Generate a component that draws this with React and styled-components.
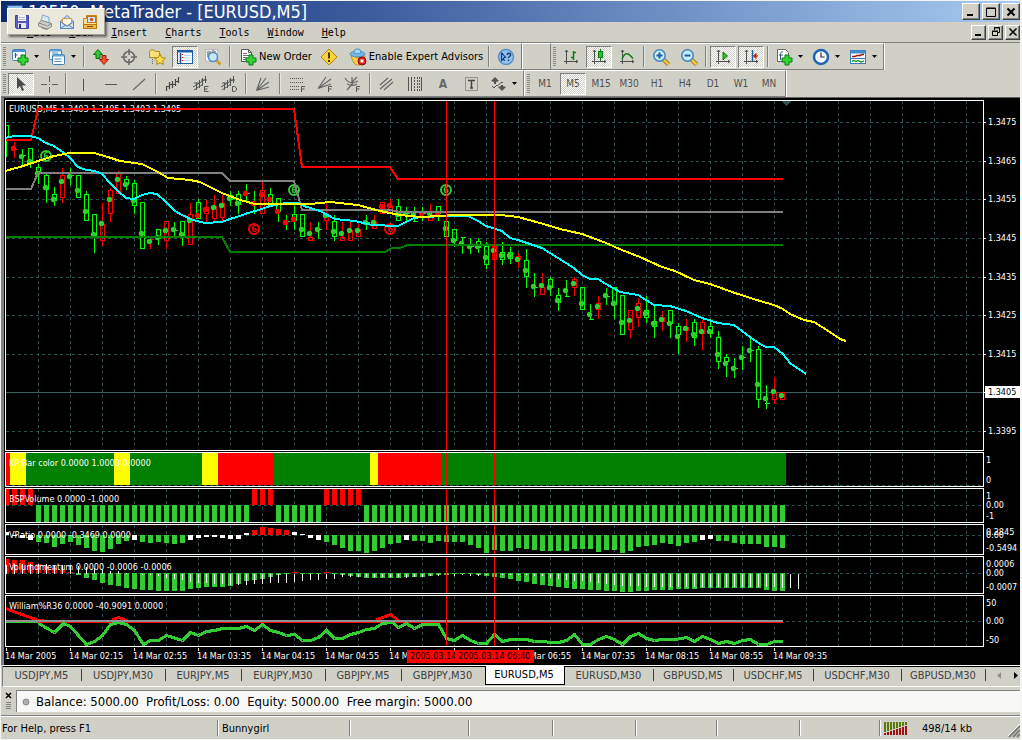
import React from 'react';
import styled, { createGlobalStyle } from 'styled-components';

const UI_FONT = '"DejaVu Sans Condensed", "Noto Sans", sans-serif';
const FACE = '#d1d0c7';
const GRID = '#2f4f4f';
const UP = '#ff0000';
const DOWN = '#00ff00';
const LIME = '#32cd32';

const GlobalStyle = createGlobalStyle`
  * {
    box-sizing: border-box;
  }

  body {
    margin: 0;
    background: ${FACE};
    font-family: ${UI_FONT};
    font-size: 11px;
    color: #000;
  }

  button {
    font: inherit;
    color: inherit;
    border: 0;
    padding: 0;
    background: none;
  }

  svg {
    display: block;
  }
`;

const Window = styled.div`
  position: relative;
  background: ${FACE};
  border: 1px solid #f4f4f0;
  border-right-width: 2px;
`;

const TitleBar = styled.header`
  display: flex;
  align-items: center;
  height: 21px;
  padding: 0 0 0 6px;
  gap: 4px;
  background: linear-gradient(90deg, #0c2a70 0%, #3c5c9e 36%, #7394c8 68%, #a6caf0 100%);
`;

const Title = styled.h1`
  flex: 1;
  margin: 0;
  font-size: 18px;
  line-height: 21px;
  font-weight: 400;
  color: #fff;
  white-space: pre;
`;

const WindowButtons = styled.div`
  display: flex;
  gap: 2px;
`;

const WindowButton = styled.button`
  display: flex;
  align-items: center;
  justify-content: center;
  width: ${props => (props.$small ? 15 : 18)}px;
  height: ${props => (props.$small ? 15 : 17)}px;
  background: ${FACE};
  border: 1px solid;
  border-color: #fff #404040 #404040 #fff;
  box-shadow: inset -1px -1px 0 #808080;
`;

const MenuBar = styled.nav`
  display: flex;
  align-items: center;
  height: 21px;
  padding-left: 26px;
  border-bottom: 1px solid #808080;
  font-family: "DejaVu Sans Mono", "Liberation Mono", monospace;
  font-size: 10px;
`;

const MenuItem = styled.button`
  margin-right: 18px;
  padding-top: 2px;
  line-height: 18px;

  &::first-letter {
    text-decoration: underline;
  }
`;

const Spacer = styled.div`
  flex: 1;
`;

// hovers over the title and the first menu entries
const FloatingBar = styled.div`
  position: absolute;
  left: 6px;
  top: 7px;
  display: flex;
  align-items: center;
  justify-content: space-between;
  width: 98px;
  height: 27px;
  padding: 0 6px;
  background: #ebe9dc;
  border: 1px solid;
  border-color: #fff #a5a294 #a5a294 #fff;
  box-shadow: 2px 2px 2px rgba(0, 0, 0, 0.5);
`;

const ToolRow = styled.div`
  display: flex;
  height: 27px;
`;

const Bar = styled.div`
  display: flex;
  align-items: center;
  gap: 2px;
  padding: 0 2px;
  border-top: 1px solid #fff;
  border-bottom: 1px solid #808080;
  border-right: 1px solid #808080;
  box-shadow: 1px 0 0 #fff;

  & + & {
    padding: 0 3px;
  }
`;

const BarGap = styled.div`
  width: 29px;
  border-top: 1px solid #fff;
  border-bottom: 1px solid #808080;
  border-right: 1px solid #808080;
`;

const Grip = styled.span`
  width: 3px;
  height: 20px;
  background: repeating-linear-gradient(180deg, #8a8a84 0 1px, ${FACE} 1px 2px);
`;

const Separator = styled.span`
  width: 2px;
  height: 21px;
  margin: 0 1px;
  border-left: 1px solid #808080;
  border-right: 1px solid #e6e6e0;
`;

const ToolButton = styled.button`
  display: flex;
  align-items: center;
  justify-content: center;
  width: 26px;
  height: 22px;
  border: 1px solid transparent;
  border-color: ${props => (props.$pressed ? '#808080 #fff #fff #808080' : 'transparent')};
  background: ${props =>
    props.$pressed ? `repeating-conic-gradient(#fff 0 25%, ${FACE} 0 50%) 0 0 / 2px 2px` : 'none'};
`;

const DropButton = styled(ToolButton)`
  width: 35px;
  justify-content: flex-start;
  gap: 4px;
  padding-left: 2px;
`;

const TextButton = styled(ToolButton)`
  width: auto;
  justify-content: flex-start;
  gap: 2px;
  padding: 0 1px 0 4px;
  white-space: nowrap;
`;

const PeriodButton = styled(ToolButton)`
  font-size: 10px;
  color: #505050;
`;

const LetterButton = styled(ToolButton)`
  font-size: 12px;
  font-weight: 700;
  color: #666;
`;

const ChartWindow = styled.main`
  display: flex;
  flex-direction: column;
  gap: 1px;
  padding: 2px 0 0 1px;
  background: #000;
  border-top: 1px solid #606060;
  border-left: 3px solid #808080;
`;

const Pane = styled.section`
  display: grid;
  grid-template-columns: minmax(0, 1fr) 36px;
  height: ${props => props.$height}px;
`;

const Plot = styled.div`
  border: 1px solid #fff;
  overflow: hidden;
`;

const Canvas = styled.svg`
  width: 100%;
  height: 100%;
`;

const ChartText = styled.text`
  font-family: ${UI_FONT};
  font-size: 9px;
  fill: ${props => props.$color || '#fff'};
`;

const SignalText = styled(ChartText)`
  font-weight: 700;
  text-anchor: middle;
`;

const TimeAxis = styled.div`
  position: relative;
  display: flex;
  height: 17px;
  overflow: hidden;
`;

const TimeLabel = styled.span`
  flex: 0 0 64px;
  padding-top: 2px;
  font-size: 9px;
  line-height: 12px;
  color: #fff;
  white-space: nowrap;

  &::before {
    content: '';
    position: absolute;
    top: 0;
    width: 1px;
    height: 3px;
    margin-left: 1px;
    background: #fff;
  }
`;

const TimeMark = styled.span`
  position: absolute;
  top: 2px;
  left: ${props => props.$x}px;
  width: ${props => props.$width}px;
  height: 13px;
  padding-left: 3px;
  overflow: hidden;
  font-size: 9px;
  line-height: 13px;
  white-space: nowrap;
  color: #000;
  background: #f00;
`;

const TabBar = styled.div`
  display: flex;
  height: 22px;
  margin-left: 1px;
  border-top: 1px solid #fff;
  border-bottom: 1px solid #fff;
  border-left: 1px solid #808080;
`;

const Tab = styled.button`
  flex: 0 0 ${props => props.$width}px;
  position: relative;
  height: 19px;
  padding: 0 2px 2px 0;
  border-top: 1px solid #000;
  color: #404040;

  &::after {
    content: '';
    position: absolute;
    right: 0;
    top: 2px;
    width: 1px;
    height: 12px;
    background: #404040;
  }

  &[aria-selected='true'] {
    color: #000;
    background: #fff;
    border: 1px solid #000;
    border-top: 0;
  }

  &[aria-selected='true']::after,
  &:has(+ [aria-selected='true'])::after {
    display: none;
  }
`;

const TabScroll = styled.div`
  flex: 1;
  display: flex;
  justify-content: flex-end;
  gap: 8px;
  padding-right: 1px;
  height: 19px;
  border-top: 1px solid #000;
`;

const Terminal = styled.div`
  display: flex;
  height: 29px;
  padding-top: 3px;
  border-bottom: 1px solid #808080;
`;

const TerminalSide = styled.div`
  display: flex;
  flex-direction: column;
  align-items: center;
  gap: 3px;
  width: 15px;
  padding-top: 2px;
`;

const TerminalGrip = styled.span`
  width: 5px;
  height: 8px;
  background: repeating-linear-gradient(180deg, #808080 0 1px, ${FACE} 1px 2px);
`;

const AccountLine = styled.div`
  flex: 1;
  display: flex;
  align-items: center;
  gap: 6px;
  height: 22px;
  padding-left: 5px;
  background: #f8f8f6;
  border-top: 1px solid #808080;
  border-left: 1px solid #808080;
  font-size: 13px;
  white-space: pre;
`;

const StatusBar = styled.footer`
  display: flex;
  align-items: center;
  height: 23px;
  border-top: 1px solid #fff;
`;

const StatusCell = styled.div`
  flex: ${props => props.$grow || 0} 0 ${props => props.$width}px;
  display: flex;
  align-items: center;
  gap: 14px;
  height: 16px;
  padding-left: ${props => (props.$first ? 1 : 4)}px;
  border-left: ${props => (props.$first ? '0' : '1px solid #808080')};
  box-shadow: ${props => (props.$first ? 'none' : 'inset 1px 0 0 #fff')};
  white-space: nowrap;
`;

/* ---------- icons ---------- */

const Icon = ({ children, size = 18 }) => (
  <svg width={size} height={size} viewBox={`0 0 ${size} ${size}`} fill="none" aria-hidden="true">
    {children}
  </svg>
);

const DropArrow = () => (
  <svg width="7" height="4" viewBox="0 0 7 4" aria-hidden="true">
    <path d="M1 0h5L3.500 3z" fill="#000" />
  </svg>
);

const Plus = ({ x, y }) => (
  <path
    d={`M${x + 3} ${y}h4v3h3v4h-3v3h-4v-3h-3v-4h3z`}
    fill="#33d633"
    stroke="#0a7d14"
  />
);

const Axes = ({ color = '#505050' }) => (
  <path d="M4.500 2v14M2 13.500h14M3 4l1.500-2L6 4M14 12l2 1.500-2 1.500" stroke={color} />
);

const icons = {
  newChart: (
    <>
      <rect x="1.500" y="1.500" width="13" height="11" rx="1" fill="#f4faff" stroke="#3f7fb5" />
      <path d="M2 3h12" stroke="#4d96cf" strokeWidth="2" />
      <path d="M4.500 5v5M3.500 7h3" stroke="#357" />
      <Plus x={7} y={7} />
    </>
  ),
  profiles: (
    <>
      <rect x="1.500" y="1.500" width="12" height="10" rx="1" fill="#eaf5fd" stroke="#3f7fb5" />
      <rect x="4.500" y="6.500" width="12" height="10" rx="1" fill="#f7fbff" stroke="#3f7fb5" />
      <path d="M2 2.500h11M5 7.500h11" stroke="#5fa3d8" strokeWidth="2" />
      <path d="M4 5h6M6.500 11h7M6.500 13.500h7" stroke="#5a93c0" />
    </>
  ),
  quotes: (
    <>
      <path d="M6 1.500l4.500 5H8v4H4v-4H1.500z" fill="#35c435" stroke="#0b6b12" />
      <path d="M12 16.500l-4.500-5H10v-4h4v4h2.500z" fill="#f2502a" stroke="#a01b08" />
    </>
  ),
  crosshair: (
    <>
      <circle cx="9" cy="9" r="5.500" stroke="#666" strokeWidth="1.500" />
      <path d="M9 1v6M9 11v6M1 9h6M11 9h6" stroke="#666" strokeWidth="1.500" />
    </>
  ),
  navigator: (
    <>
      <path d="M1.500 3.500l1-1.500h4l1 1.500h4v6h-10z" fill="#f8e07a" stroke="#b08e1c" />
      <path d="M4.500 11v5" stroke="#666" strokeDasharray="1 1" />
      <path d="M12 6l1.700 3.600 3.800.5-2.800 2.600.7 3.800L12 14.600l-3.400 1.900.7-3.800-2.800-2.600 3.800-.5z" fill="#ffe14d" stroke="#b8860b" />
    </>
  ),
  marketWatch: (
    <>
      <rect x="1.500" y="2.500" width="15" height="13" fill="#fff" stroke="#1b5ca8" />
      <path d="M2 3.500h14" stroke="#1b5ca8" strokeWidth="2" />
      <path d="M4.500 5v10" stroke="#174a8a" strokeWidth="1.500" />
      <path d="M8 7.500h7M8 10h7M8 12.500h7" stroke="#b9d4ef" />
      <path d="M6.500 6v1M6.500 9v1M6.500 12v1" stroke="#e00" strokeWidth="1.500" />
    </>
  ),
  dataWindow: (
    <>
      <path d="M1.500 1.500h12v12h-12z" fill="#eee" stroke="#999" strokeDasharray="1 1" />
      <path d="M4 9V3M6 7V3M9 7V2M11 6V3" stroke="#555" />
      <path d="M12.500 12.500l4 4" stroke="#d59a28" strokeWidth="2.500" />
      <circle cx="9" cy="9" r="4.500" fill="#c8e8fa" stroke="#4f8fbf" strokeWidth="1.500" />
    </>
  ),
  newOrder: (
    <>
      <path d="M2.500 1.500h7l3 3v9h-10z" fill="#fff" stroke="#555" />
      <path d="M9.500 1.500v3h3" stroke="#555" />
      <path d="M4 5.500h4M4 7.500h6M4 9.500h4M4 11.500h3" stroke="#777" />
      <Plus x={7} y={7} />
    </>
  ),
  warning: (
    <>
      <path d="M9 1l8 8-8 8-8-8z" fill="#fbd23a" stroke="#b8860b" strokeLinejoin="round" />
      <path d="M9 4.500v6M9 12v2" stroke="#4c3a00" strokeWidth="2" />
    </>
  ),
  expert: (
    <>
      <path d="M2 7l7 3 7-2-2 5c-1 3-3 4-5 4-4 0-6-5-7-10z" fill="#f7d046" stroke="#b98b16" />
      <ellipse cx="8.500" cy="6" rx="7.500" ry="2.800" fill="#79b9e8" stroke="#4a90c4" />
      <path d="M5 5c0-3 1-4 3.500-4S12 2 12 5c-2 1-5 1-7 0z" fill="#a4d4f4" stroke="#4a90c4" />
      <circle cx="13" cy="13" r="4" fill="#e01b1b" stroke="#8d0b0b" />
      <rect x="11.500" y="11.500" width="3" height="3" fill="#fff" />
    </>
  ),
  help: (
    <>
      <circle cx="9" cy="9" r="7.500" fill="#8fc3ee" stroke="#5a8fc6" strokeWidth="1.500" />
      <path d="M4.500 4.500v8l2-2 1 2.500M4.500 4.500l4 5H6.500" stroke="#123f7a" strokeWidth="1.200" />
      <path d="M10 7c.5-2.500 4-2 3.500 0 0 1.500-2 1.500-2 3M11.500 11.500v1.500" stroke="#123f7a" strokeWidth="1.500" />
    </>
  ),
  barChart: (
    <>
      <Axes />
      <path d="M11.500 3v9M9 9.500h2.500M11.500 4.500H14" stroke="#0a7d14" strokeWidth="1.500" />
    </>
  ),
  candles: (
    <>
      <Axes />
      <path d="M10.500 1v12" stroke="#0a7d14" />
      <rect x="8.500" y="3.500" width="4" height="6" fill="#27c527" stroke="#0a7d14" />
    </>
  ),
  lineChart: (
    <>
      <Axes />
      <path d="M4 11c2-5 4-6 6-5 2 .5 3 2.500 5 4.500" stroke="#0a7d14" strokeWidth="1.500" />
    </>
  ),
  zoomIn: (
    <>
      <path d="M11.500 11.500l5 5" stroke="#8a6410" strokeWidth="4" />
      <path d="M11.500 11.500l5 5" stroke="#f2c83c" strokeWidth="2.500" />
      <circle cx="7.500" cy="7.500" r="5.700" fill="#c9ecfc" stroke="#3a86bd" strokeWidth="1.500" />
      <path d="M7.500 4.500v6M4.500 7.500h6" stroke="#1c5f9a" strokeWidth="2" />
    </>
  ),
  zoomOut: (
    <>
      <path d="M11.500 11.500l5 5" stroke="#8a6410" strokeWidth="4" />
      <path d="M11.500 11.500l5 5" stroke="#f2c83c" strokeWidth="2.500" />
      <circle cx="7.500" cy="7.500" r="5.700" fill="#c9ecfc" stroke="#3a86bd" strokeWidth="1.500" />
      <path d="M4.500 7.500h6" stroke="#1c5f9a" strokeWidth="2" />
    </>
  ),
  autoScroll: (
    <>
      <Axes />
      <path d="M9 4v8l4.500-4z" fill="#27c527" stroke="#0a7d14" />
    </>
  ),
  chartShift: (
    <>
      <Axes />
      <path d="M10.500 2v11" stroke="#1c5f9a" strokeWidth="1.500" />
      <path d="M16 8h-4M14 5.500L11.500 8l2.500 2.500z" stroke="#c01c0c" fill="#c01c0c" />
    </>
  ),
  indicators: (
    <>
      <path d="M2.500 1.500h8l3 3v9h-11z" fill="#fff" stroke="#666" />
      <path d="M8 4c-2-1-2.500 1-2.500 3v5M4 7h4" stroke="#357" />
      <Plus x={7} y={7} />
    </>
  ),
  clock: (
    <>
      <circle cx="9" cy="9" r="7" fill="#f2f8fd" stroke="#1f63b5" strokeWidth="2.500" />
      <path d="M9 4.500V9h3.500" stroke="#333" strokeWidth="1.200" />
    </>
  ),
  templates: (
    <>
      <rect x="1.500" y="2.500" width="15" height="13" fill="#fff" stroke="#3a7bb8" />
      <path d="M2 4h14" stroke="#3f8ed0" strokeWidth="3" />
      <path d="M3 8.500h3l2-1h3l2-1h2" stroke="#a3180c" strokeWidth="1.500" />
      <path d="M2 10.500h14" stroke="#3a7bb8" />
      <path d="M3 13.500l2-1 2 1 2-1 3 1.500 3-1" stroke="#0a8a1c" strokeWidth="1.200" />
    </>
  ),
  cursor: <path d="M5 2v12l3-3 2 5 2-1-2-4.500h4z" fill="#4a4a4a" />,
  cross: <path d="M9.500 1v6M9.500 12v6M1 9.500h6M12 9.500h6M9 9.500h1" stroke="#606060" />,
  vline: <path d="M9.500 4v12" stroke="#555" />,
  hline: <path d="M3 9.500h12" stroke="#555" />,
  trend: <path d="M3 15L15 4" stroke="#666" strokeWidth="1.200" />,
  wave: (
    <path d="M2.500 16v-5M2.500 11.500h3M5.500 14V7M5.500 9.500h3M8.500 13V6M8.500 9.500h3M11.500 11V4M11.500 6.500h3M14.500 8V2" stroke="#444" strokeWidth="1.200" />
  ),
  waveE: (
    <>
      <path d="M1 12L14 4M2 15L11 9M4.500 15V8M7.500 13V5M10.500 11V3M13.500 8V1M2 8h6M9 5h6" stroke="#555" />
      <path d="M16.500 11.500h-4v5h4M12.500 14h3" stroke="#555" />
    </>
  ),
  waveD: (
    <>
      <path d="M1 12L14 4M2 15L11 9M4.500 15V8M7.500 13V5M10.500 11V3M13.500 8V1M2 8h6M9 5h6" stroke="#555" />
      <path d="M12.500 11.500h2l2 1.500v2l-2 1.500h-2z" stroke="#555" />
    </>
  ),
  fan: <path d="M2.500 15.500L15 12M2.500 15.500L15 7M2.500 15.500L12 3M2.500 15.500L7 3" stroke="#666" strokeWidth="1.200" />,
  fibo: (
    <>
      <path d="M2 3.500h14M2 7.500h14M2 11.500h9M2 14.500h9" stroke="#555" strokeDasharray="1 1" />
      <path d="M13.500 17v-5.500h3.500M13.500 14h3" stroke="#555" />
    </>
  ),
  fiboFan: (
    <>
      <path d="M2 13.500L15 9M2 13.500L15 4M2 13.500L10 2" stroke="#666" strokeWidth="1.200" />
      <path d="M12.500 17v-5.500h3.500M12.500 14h3" stroke="#555" />
    </>
  ),
  fiboArc: (
    <>
      <path d="M1 3c3 5 8 6 13 3M3 9c4 2 7 2 10 0M9 8L3 15M7 8l6-6M8 2v8" stroke="#666" strokeWidth="1.200" />
      <path d="M12.500 17v-5.500h3.500M12.500 14h3" stroke="#555" />
    </>
  ),
  channel: <path d="M2 10l8-7M2 14L14 4M6 15l9-8" stroke="#666" strokeWidth="1.200" />,
  cycles: (
    <>
      <path d="M2.500 2v14M5.500 2v14M15.500 2v14" stroke="#555" />
      <path d="M8.500 2v14M11.500 2v14M13.500 2v14" stroke="#555" strokeDasharray="2 1" />
    </>
  ),
  label: (
    <>
      <rect x="3.500" y="2.500" width="12" height="13" stroke="#555" strokeDasharray="1 1" />
      <path d="M6 5.500h7M9.500 5v8M8 13h3" stroke="#444" strokeWidth="1.500" />
    </>
  ),
  shapes: (
    <>
      <path d="M6 2l4 4-3 1v2H5V7L2 6z" fill="#555" />
      <path d="M8 11l5-4 1 1" stroke="#555" />
      <path d="M13 16l4-4-3-1v-1h-2v1l-3 1z" fill="#555" />
      <path d="M3 11l2 2 3-3" stroke="#555" />
    </>
  ),
  save: (
    <>
      <path d="M1.500 1.500h13v13h-12l-1-1z" fill="#5b5bc0" stroke="#44449c" />
      <rect x="4" y="1" width="8" height="6" fill="#f4f4fb" />
      <path d="M5 3.500h6M5 5.500h6" stroke="#b8b8d8" />
      <rect x="4" y="9" width="8" height="5" fill="#e4e4f4" />
      <rect x="5" y="10" width="2" height="4" fill="#2b2b86" />
    </>
  ),
  print: (
    <>
      <path d="M4 7l1.500-6 6 2 1 6z" fill="#d6e9fb" stroke="#8ea6c4" />
      <path d="M1.500 9l3-2.500 10 3v3l-4 2.500-9-3z" fill="#d0d0cc" stroke="#8a8a84" />
      <path d="M2 9l8.500 3 4-2.500M4 13.500l5 2 2-1" stroke="#8a8a84" />
    </>
  ),
  mail: (
    <>
      <path d="M1.500 7L8 1.500 14.500 7v7.500h-13z" fill="#cfe3fa" stroke="#5a86c9" />
      <path d="M3.500 4.500h9v5l-4.500 3-4.500-3z" fill="#fff6dd" stroke="#d39a4c" />
      <path d="M1.500 7.500L8 12l6.500-4.500M1.500 14.500L6.500 11M14.500 14.500l-5-3.500" stroke="#5a86c9" />
    </>
  ),
  pictures: (
    <>
      <path d="M1.500 4.500h3v-3h10v13h-13z" fill="#ffe39b" stroke="#c8851a" />
      <rect x="5.500" y="2.500" width="8" height="6" fill="#cfe9fb" stroke="#b9770e" />
      <circle cx="9.500" cy="5.500" r="1.700" fill="#d24b33" />
      <path d="M1.500 10.500h13v4h-13z" fill="#f8b94a" stroke="#b9770e" />
      <path d="M5 12.500h6" stroke="#7b4a00" />
    </>
  ),
};

/* ---------- chart data ---------- */

const barX = i => 6 + i * 8;

// rising, high, body top, body bottom, low, marker, rising marker
const candles = [
  [0, 125, 125, 137, 156], [1, 141, 149, 149, 157, 148, 1], [0, 148, 155, 155, 165, 156], [0, 148, 148, 162, 167, 161],
  [0, 163, 167, 171, 183, 173], [0, 171, 175, 189, 202, 187], [0, 186, 194, 200, 205, 199], [1, 167, 175, 197, 202, 181],
  [0, 167, 175, 175, 184, 176], [0, 175, 175, 197, 197, 190], [0, 190, 194, 220, 220, 211], [0, 214, 214, 235, 252, 234],
  [1, 202, 224, 240, 245, 223], [1, 187, 190, 213, 221, 199], [1, 170, 172, 193, 193, 179], [0, 175, 179, 184, 189, 184],
  [0, 179, 183, 205, 213, 200], [0, 202, 202, 248, 248, 233], [1, 238, 239, 239, 248, 241], [0, 229, 229, 238, 244, 237],
  [1, 221, 221, 240, 248, 230], [0, 221, 230, 230, 236, 229], [0, 221, 221, 235, 245, 234], [1, 202, 214, 244, 244, 220],
  [0, 198, 202, 218, 218, 215, 1], [1, 199, 207, 213, 221, 209, 1], [1, 194, 206, 218, 221, 207], [1, 194, 203, 217, 221, 205],
  [0, 190, 195, 199, 205, 198], [0, 190, 194, 204, 213, 203], [0, 183, 193, 193, 202, 193, 1], [0, 190, 203, 203, 213, 203, 1],
  [1, 179, 190, 213, 213, 194, 1], [0, 187, 194, 203, 203, 199, 1], [0, 198, 198, 211, 221, 211, 1], [0, 214, 221, 221, 229, 222, 1],
  [0, 203, 214, 220, 229, 219, 1], [0, 214, 214, 236, 236, 229], [1, 221, 237, 240, 240, 233], [0, 221, 229, 229, 238, 229],
  [1, 203, 214, 220, 229, 215], [0, 214, 221, 236, 240, 231], [1, 221, 237, 240, 240, 233], [1, 221, 230, 240, 240, 230],
  [1, 223, 229, 236, 236, 230], [0, 214, 222, 222, 229, 222], [1, 214, 221, 228, 228, 222], [1, 202, 202, 213, 213, 206, 1],
  [1, 198, 206, 213, 213, 205, 1], [0, 198, 206, 220, 220, 214], [0, 206, 213, 213, 220, 213], [0, 206, 221, 221, 221, 214],
  [0, 206, 213, 213, 220, 213, 1], [1, 203, 214, 220, 220, 213], [0, 206, 206, 213, 220, 213, 1], [0, 221, 221, 236, 236, 228],
  [0, 229, 229, 240, 246, 240], [0, 237, 237, 237, 253, 243], [0, 237, 246, 246, 253, 246], [0, 237, 241, 247, 252, 246],
  [0, 241, 246, 264, 268, 257], [1, 246, 246, 259, 259, 250], [0, 241, 252, 259, 264, 255], [0, 246, 252, 258, 263, 255],
  [1, 252, 256, 259, 267, 259], [0, 248, 260, 276, 287, 270], [0, 272, 287, 287, 296, 286], [1, 272, 287, 294, 294, 285],
  [0, 276, 279, 287, 295, 287], [0, 287, 295, 302, 310, 300], [0, 279, 296, 296, 296, 290], [1, 276, 279, 287, 295, 283],
  [0, 287, 287, 309, 309, 303], [0, 303, 319, 319, 319, 314], [1, 295, 303, 309, 318, 306], [0, 287, 296, 296, 304, 295],
  [0, 287, 287, 304, 318, 303], [0, 295, 295, 334, 334, 322], [1, 310, 310, 329, 337, 320], [1, 297, 303, 317, 326, 308],
  [0, 295, 310, 317, 322, 313], [0, 305, 321, 326, 337, 323], [1, 310, 317, 321, 330, 319], [0, 310, 310, 323, 337, 323],
  [0, 322, 326, 334, 353, 336], [1, 318, 327, 330, 341, 328], [0, 318, 322, 337, 345, 334], [1, 319, 322, 333, 349, 331],
  [0, 318, 326, 333, 337, 331], [0, 330, 337, 361, 368, 354], [0, 353, 357, 361, 376, 363], [0, 357, 368, 368, 377, 368],
  [0, 345, 357, 357, 369, 357], [0, 338, 350, 350, 361, 350], [0, 345, 349, 399, 407, 384], [0, 384, 403, 403, 408, 398],
  [1, 376, 392, 399, 403, 391], [1, 392, 392, 399, 399, 395],
];

const overlays = [
  { color: '#f00', points: '5,140 31,140 38,109 294,109 302,167 390,167 398,179 783,179' },
  { color: '#808080', points: '5,189 31,189 38,173 222,173 230,181 294,181 302,210 390,210 400,212 783,212' },
  { color: '#008000', points: '5,237 222,237 230,252 385,252 392,248 400,248 408,245 783,245' },
  {
    color: '#0ff',
    points:
      '5,138 14,136 30,136 38,138 46,143 54,146 64,153 70,158 78,167 86,170 95,171 102,174 110,183 118,191 126,198 134,199 142,195 150,193 157,194 166,202 175,211 182,215 193,220 205,223 222,222 230,219 240,216 248,213 262,209 270,206 286,203 298,203 304,206 320,211 335,219 355,221 372,225 398,226 408,221 414,218 422,217 446,216 468,216 478,221 486,226 502,231 510,238 518,240 530,244 542,248 558,258 574,268 582,275 590,279 598,279 606,284 620,292 638,295 654,305 670,306 686,311 702,318 718,323 734,325 750,337 760,344 766,347 774,347 783,354 790,363 806,374',
  },
  {
    color: '#ff0',
    points:
      '5,171 20,167 38,161 54,156 70,153 94,153 108,157 120,161 142,164 158,172 168,178 190,180 200,182 222,193 240,200 255,204 310,204 330,202 358,205 380,211 400,215 420,217 440,216 454,215 500,215 518,217 540,223 560,229 582,234 606,243 622,250 640,257 662,267 675,271 694,280 710,284 735,293 760,301 774,305 783,309 790,314 804,320 814,322 830,332 840,339 846,341',
  },
];

const signals = [
  [46, 156, LIME], [294, 190, LIME], [446, 190, LIME], [254, 229, '#f00'], [390, 229, '#f00'],
];

const prices = ['1.3475', '1.3465', '1.3455', '1.3445', '1.3435', '1.3425', '1.3415', '1.3405', '1.3395'];
const priceY = i => Math.round(122 + (i * 309) / 8);

const colorBands = [
  [6, 10, '#f00'], [10, 26, '#ff0'], [26, 114, '#008000'], [114, 130, '#ff0'], [130, 202, '#008000'],
  [202, 218, '#ff0'], [218, 274, '#f00'], [274, 370, '#008000'], [370, 378, '#ff0'], [378, 442, '#f00'],
  [442, 786, '#008000'],
];

const isBuyVolume = i => i < 4 || (i > 30 && i < 34) || (i > 39 && i < 45);

const ratio = [
  -3, 1, 3, 5, 7, 8, 12, 9, 7, 10, 13, 16, 17, 14, 9, 6, 5, 7, 8, 7, 8, 9, 8, 5, 3, 2, 2, 3, 4, 4, -2, -5, -8, -7, -6, -5,
  -3, -1, 3, 5, 7, 10, 13, 16, 16, 18, 16, 13, 9, 8, 5, 6, 6, 8, 6, 7, 7, 7, 10, 13, 18, 15, 16, 16, 13, 14, 15, 16, 16,
  16, 16, 14, 14, 14, 17, 15, 15, 18, 16, 12, 11, 10, 8, 9, 11, 8, 7, 5, 4, 6, 6, 8, 9, 9, 9, 12, 12, 13,
];

const ratioColor = v => {
  if (v <= -5) return '#f00';
  return v < 6 ? '#fff' : LIME;
};

const momentum = [
  -14, -13, -13, -11, -9, -7, -5, -3, -1, 2, 5, 7, 10, 12, 13, 15, 16, 17, 17, 18, 18, 18, 18, 16, 15, 14, 14, 14, 13, 11,
  8, 7, 6, 4, 2, 1, -1, 1, 1, 1, -1, 1, 2, 3, 4, 5, 5, 5, 5, 5, 4, 4, 4, 3, 2, 2, 1, 1, 1, 2, 3, 4, 5, 6, 8, 9, 11, 12,
  13, 14, 15, 16, 16, 17, 17, 18, 18, 19, 19, 18, 18, 17, 17, 17, 16, 16, 16, 15, 15, 15, 15, 15, 15, 15, 15, 17, 18, 18,
];

const momentumSignal = [
  -9, -10, -10, -10, -10, -10, -9, -9, -9, -8, -7, -6, -4, -3, -3, -1, 0, 1, 1, 2, 4, 5, 6, 8, 9, 9, 10, 10, 11, 11, 11,
  10, 10, 9, 9, 9, 8, 7, 6, 6, 5, 5, 3, 3, 3, 3, 3, 3, 3, 3, 4, 3, 3, 2, 2, 2, 2, 1, 2, 2, 1, 1, 1, 1, 1, 1, 2, 2, 4, 5,
  6, 7, 7, 8, 9, 10, 11, 12, 12, 12, 13, 13, 13, 13, 13, 13, 13, 13, 13, 13, 13, 13, 13, 13, 13, 13, 13, 14, 14, 15,
];

const williams =
  '38,623 54,632 63,623 70,626 86,644 94,641 102,635 110,624 118,622 126,624 134,630 143,644 150,640 158,640 166,635 182,640 190,632 198,635 206,631 214,630 222,628 238,628 246,626 254,630 262,624 270,630 278,632 286,635 294,634 302,640 310,640 318,637 326,630 334,638 342,638 350,634 358,632 366,629 374,628 382,623 392,622 398,627 406,623 414,628 422,624 438,624 446,638 454,640 462,635 470,640 478,643 486,643 494,634 502,641 510,639 526,639 534,641 558,642 566,640 574,634 582,644 590,644 598,639 606,636 614,639 622,644 630,636 638,633 646,638 654,640 662,639 675,639 686,637 694,641 702,636 710,639 718,643 726,641 734,643 742,640 750,639 758,644 766,644 774,641 782,641';

const times = [
  '14 Mar 2005', '14 Mar 02:15', '14 Mar 02:55', '14 Mar 03:35', '14 Mar 04:15', '14 Mar 04:55', '14 M', '',
  '14 Mar 06:55', '14 Mar 07:35', '14 Mar 08:15', '14 Mar 08:55', '14 Mar 09:35',
];

const tabs = [
  ['USDJPY,M5', 79], ['USDJPY,M30', 84], ['EURJPY,M5', 76], ['EURJPY,M30', 84], ['GBPJPY,M5', 76], ['GBPJPY,M30', 83],
  ['EURUSD,M5', 80], ['EURUSD,M30', 89], ['GBPUSD,M5', 80], ['USDCHF,M5', 80], ['USDCHF,M30', 88], ['GBPUSD,M30', 84],
];

/* ---------- chart parts ---------- */

// hairlines sit on pixel centres, filled shapes and even strokes on pixel edges
const Hairlines = props => <g transform="translate(0.5 0.5)" fill="none" {...props} />;

// y values are measured on one common scale, `top` is where the pane starts on it
const ChartPane = ({ top, height, label, labelBehind, levels, ticks, children }) => {
  const main = height > 100;
  const title = <ChartText x="9" y={top + (main ? 12 : 14)}>{label}</ChartText>;

  return (
    <Pane $height={height}>
      <Plot>
        <Canvas>
          <g transform={`translate(-6 ${-top - 1})`} shapeRendering="crispEdges" fill="none">
            <Hairlines stroke={GRID} strokeDasharray="3 3">
              {Array.from({ length: 62 }, (_, i) => (
                <path key={i} d={`M${38 + i * 32} ${top}v${height}`} />
              ))}
              {levels.map(y => (
                <path key={y} d={`M5 ${y}h2000`} />
              ))}
            </Hairlines>
            {labelBehind && title}
            {children}
            {!labelBehind && title}
            <Hairlines stroke="#f00">
              <path d={`M446 ${top}v${height}M494 ${top}v${height}`} />
            </Hairlines>
          </g>
        </Canvas>
      </Plot>
      <Canvas>
        <g transform={`translate(-984 ${-top})`} shapeRendering="crispEdges">
          {ticks.map(([text, y]) => {
            const current = text === '1.3405';
            return (
              <React.Fragment key={text}>
                {main && <rect x="984" y={y} width="2" height="1" fill="#fff" />}
                {current && <rect x="985" y="386" width="35" height="12" fill="#fff" />}
                <ChartText x={main ? 988 : 986} y={y + 3} $color={current ? '#000' : '#fff'}>
                  {text}
                </ChartText>
              </React.Fragment>
            );
          })}
        </g>
      </Canvas>
    </Pane>
  );
};

const Candle = ({ x, data }) => {
  const [rising, high, open, close, low, marker, risingMarker] = data;
  return (
    <>
      <g stroke={rising ? UP : DOWN}>
        {high < open && <path d={`M${x} ${high}V${open}`} />}
        {close < low && <path d={`M${x} ${close}V${low}`} />}
        {open === close ? (
          <path d={`M${x - 2} ${open}h5`} />
        ) : (
          <rect x={x - 2} y={open} width="4" height={close - open} />
        )}
      </g>
      {marker && (
        <circle cx={x - 1} cy={marker} r="2.700" fill={risingMarker ? '#f00' : LIME} shapeRendering="auto" />
      )}
    </>
  );
};

const Histogram = ({ values, zero, color }) =>
  values.map((v, i) => (
    <rect key={i} x={barX(i) - 2} y={v < 0 ? zero + v : zero} width="5" height={Math.abs(v)} fill={color(v)} />
  ));

const Chart = () => (
  <ChartWindow>
    <ChartPane
      top={100}
      height={351}
      label="EURUSD,M5  1.3403 1.3405 1.3403 1.3405"
      labelBehind
      levels={prices.map((_, i) => priceY(i))}
      ticks={prices.map((p, i) => [p, priceY(i)])}
    >
      <path d="M781 101h10l-5 5z" fill={GRID} />
      <Hairlines>
        <path d="M5 392h2000" stroke="#3c6060" />
        {candles.map((data, i) => (
          <Candle key={i} x={barX(i)} data={data} />
        ))}
      </Hairlines>
      {signals.map(([x, y, color]) => (
        <g key={`${x}-${y}`}>
          <circle cx={x} cy={y} r="5" stroke={color} strokeWidth="2" shapeRendering="auto" />
          <SignalText x={x} y={y + 3} $color={color}>6</SignalText>
        </g>
      ))}
      {overlays.map(line => (
        <polyline key={line.color} points={line.points} stroke={line.color} strokeWidth="2" />
      ))}
    </ChartPane>

    <ChartPane top={452} height={35} label="KP Bar color 0.0000 1.0000 0.0000" levels={[485]} ticks={[['1', 460], ['0', 480]]}>
      {colorBands.map(([from, to, color]) => (
        <rect key={from} x={from} y="453" width={to - from} height="32" fill={color} />
      ))}
    </ChartPane>

    <ChartPane
      top={488}
      height={35}
      label="BSPVolume 0.0000 -1.0000"
      levels={[505]}
      ticks={[['1', 496], ['0.00', 505], ['-1', 516]]}
    >
      {candles.map((_, i) => (
        <rect
          key={i}
          x={barX(i) - 2}
          y={isBuyVolume(i) ? 489 : 505}
          width="5"
          height={isBuyVolume(i) ? 16 : 17}
          fill={isBuyVolume(i) ? '#f00' : LIME}
        />
      ))}
    </ChartPane>

    <ChartPane
      top={524}
      height={31}
      label="VRatio 0.0000 -0.3469 0.0000"
      levels={[535]}
      ticks={[['0.2845', 532], ['0.00', 535], ['-0.5494', 548]]}
    >
      <Histogram values={ratio} zero={535} color={ratioColor} />
    </ChartPane>

    <ChartPane
      top={556}
      height={38}
      label="Volumomentum 0.0000 -0.0006 -0.0006"
      levels={[573]}
      ticks={[['0.0006', 564], ['0.00', 573], ['-0.0007', 587]]}
    >
      <Histogram values={momentum} zero={573} color={v => (v < 0 ? '#f00' : LIME)} />
      <Hairlines stroke="#fff">
        {momentumSignal.map((v, i) => (
          <path key={i} d={`M${barX(i)} 573v${v}`} />
        ))}
      </Hairlines>
    </ChartPane>

    <ChartPane
      top={595}
      height={52}
      label="William%R36 0.0000 -40.9091 0.0000"
      levels={[621]}
      ticks={[['50', 603], ['0.00', 621], ['-50', 640]]}
    >
      <rect x="5" y="622" width="33" height="1" fill={LIME} />
      <rect x="38" y="622" width="746" height="1" fill="#f00" />
      <Hairlines>
        <path d="M5 608L38 620h5M112 619l6-2 8 3M376 619l6-2 8-3 8 6" stroke="#f00" strokeWidth="3" />
        <polyline points={williams} stroke={LIME} strokeWidth="3" />
      </Hairlines>
      <rect x="5" y="620" width="778" height="2" fill="#909090" />
    </ChartPane>

    <TimeAxis>
      {times.map((time, i) => (
        <TimeLabel key={i}>{time}</TimeLabel>
      ))}
      <TimeMark $x={402} $width={48}>2005.03.14</TimeMark>
      <TimeMark $x={450} $width={79}>2005.03.14 06:40</TimeMark>
    </TimeAxis>
  </ChartWindow>
);

/* ---------- toolbars ---------- */

const Tool = ({ name, label, pressed }) => (
  <ToolButton type="button" aria-label={label} aria-pressed={pressed} $pressed={pressed}>
    <Icon>{icons[name]}</Icon>
  </ToolButton>
);

const DropTool = ({ name, label }) => (
  <DropButton type="button" aria-label={label} aria-haspopup="menu">
    <Icon>{icons[name]}</Icon>
    <DropArrow />
  </DropButton>
);

const StandardRow = () => (
  <ToolRow>
    <Bar>
      <Grip />
      <DropTool name="newChart" label="New chart" />
      <DropTool name="profiles" label="Profiles" />
      <Separator />
      <Tool name="quotes" label="Market Watch" />
      <Tool name="crosshair" label="Data Window" />
      <Tool name="navigator" label="Navigator" />
      <Tool name="marketWatch" label="Terminal" pressed />
      <Tool name="dataWindow" label="Strategy Tester" />
      <Separator />
      <TextButton type="button">
        <Icon>{icons.newOrder}</Icon>
        New Order
      </TextButton>
      <Tool name="warning" label="Alerts" />
      <TextButton type="button">
        <Icon>{icons.expert}</Icon>
        Enable Expert Advisors
      </TextButton>
      <Separator />
      <Tool name="help" label="Help" />
    </Bar>
    <BarGap />
    <Bar>
      <Grip />
      <Tool name="barChart" label="Bar chart" />
      <Tool name="candles" label="Candlesticks" pressed />
      <Tool name="lineChart" label="Line chart" />
      <Separator />
      <Tool name="zoomIn" label="Zoom in" />
      <Tool name="zoomOut" label="Zoom out" />
      <Separator />
      <Tool name="autoScroll" label="Auto scroll" pressed />
      <Tool name="chartShift" label="Chart shift" pressed />
      <Separator />
      <DropTool name="indicators" label="Indicators" />
      <DropTool name="clock" label="Periods" />
      <DropTool name="templates" label="Templates" />
    </Bar>
  </ToolRow>
);

const LineStudiesRow = () => (
  <ToolRow>
    <Bar>
      <Grip />
      <Tool name="cursor" label="Cursor" pressed />
      <Tool name="cross" label="Crosshair" />
      <Separator />
      <Tool name="vline" label="Vertical line" />
      <Tool name="hline" label="Horizontal line" />
      <Tool name="trend" label="Trendline" />
      <Separator />
      <Tool name="wave" label="Linear regression" />
      <Tool name="waveE" label="Equidistant channel" />
      <Tool name="waveD" label="Deviation channel" />
      <Separator />
      <Tool name="fan" label="Gann fan" />
      <Separator />
      <Tool name="fibo" label="Fibonacci retracement" />
      <Tool name="fiboFan" label="Fibonacci fan" />
      <Tool name="fiboArc" label="Fibonacci arcs" />
      <Separator />
      <Tool name="channel" label="Andrews pitchfork" />
      <Tool name="cycles" label="Cycle lines" />
      <LetterButton type="button">A</LetterButton>
      <Tool name="label" label="Text label" />
      <DropTool name="shapes" label="Arrows" />
    </Bar>
    <Bar>
      <Grip />
      {['M1', 'M5', 'M15', 'M30', 'H1', 'H4', 'D1', 'W1', 'MN'].map(period => (
        <PeriodButton key={period} type="button" $pressed={period === 'M5'}>
          {period}
        </PeriodButton>
      ))}
    </Bar>
  </ToolRow>
);

const WindowControls = ({ small }) => (
  <WindowButtons>
    <WindowButton type="button" aria-label="Minimize" $small={small}>
      <Icon size={10}><path d="M1 8h6" stroke="#000" strokeWidth="2" /></Icon>
    </WindowButton>
    <WindowButton type="button" aria-label={small ? 'Restore' : 'Maximize'} $small={small}>
      <Icon size={10}>
        {small ? (
          <path d="M3.500 3V.5h5v5H7M3 1h6M1.500 4.500h5v4h-5zM1 4h6" stroke="#000" />
        ) : (
          <path d="M.5 1.500h9v8h-9zM0 1.500h10M.5 1h9" stroke="#000" />
        )}
      </Icon>
    </WindowButton>
    <WindowButton type="button" aria-label="Close" $small={small}>
      <Icon size={10}><path d="M1.500 1.500l7 7M8.500 1.500l-7 7" stroke="#000" strokeWidth={small ? 1.5 : 2} /></Icon>
    </WindowButton>
  </WindowButtons>
);

const ImageTools = () => (
  <FloatingBar role="toolbar" aria-label="Image">
    <button type="button" aria-label="Save"><Icon size={16}>{icons.save}</Icon></button>
    <button type="button" aria-label="Print"><Icon size={16}>{icons.print}</Icon></button>
    <button type="button" aria-label="Mail"><Icon size={16}>{icons.mail}</Icon></button>
    <button type="button" aria-label="My pictures"><Icon size={16}>{icons.pictures}</Icon></button>
  </FloatingBar>
);

const App = () => (
  <>
    <GlobalStyle />
    <Window>
      <TitleBar>
        <Icon size={17}>
          <rect x="0" y="2" width="16" height="13" fill="#2d5f9e" />
          <path d="M1 4h14" stroke="#8dc0ee" strokeWidth="2" />
        </Icon>
        <Title>10550: MetaTrader - [EURUSD,M5]</Title>
        <WindowControls />
      </TitleBar>
      <MenuBar>
        {['File', 'View', 'Insert', 'Charts', 'Tools', 'Window', 'Help'].map(item => (
          <MenuItem key={item} type="button">{item}</MenuItem>
        ))}
        <Spacer />
        <WindowControls small />
      </MenuBar>
      <StandardRow />
      <LineStudiesRow />
      <Chart />

      <TabBar role="tablist">
        {tabs.map(([name, width]) => (
          <Tab key={name} type="button" role="tab" aria-selected={name === 'EURUSD,M5'} $width={width}>
            {name}
          </Tab>
        ))}
        <TabScroll>
          <button type="button" aria-label="Scroll left">
            <svg width="8" height="8" viewBox="0 0 8 8"><path d="M6 0v7L2 3.500z" fill="#909090" /></svg>
          </button>
          <button type="button" aria-label="Scroll right">
            <svg width="8" height="8" viewBox="0 0 8 8"><path d="M3 0v7l4-3.500z" fill="#000" /></svg>
          </button>
        </TabScroll>
      </TabBar>

      <Terminal>
        <TerminalSide>
          <button type="button" aria-label="Close terminal">
            <svg width="7" height="7" viewBox="0 0 7 7"><path d="M1 1l5 5M6 1L1 6" stroke="#000" strokeWidth="1.500" /></svg>
          </button>
          <TerminalGrip />
        </TerminalSide>
        <AccountLine>
          <Icon size={8}><circle cx="4" cy="4" r="3" fill="#b0b0b0" stroke="#888" /></Icon>
          Balance: 5000.00  Profit/Loss: 0.00  Equity: 5000.00  Free margin: 5000.00
        </AccountLine>
      </Terminal>

      <StatusBar>
        <StatusCell $first $width={216}>For Help, press F1</StatusCell>
        <StatusCell $width={132}>Bunnygirl</StatusCell>
        <StatusCell $width={119} />
        <StatusCell $width={84} />
        <StatusCell $width={83} />
        <StatusCell $width={81} />
        <StatusCell $width={83} />
        <StatusCell $width={80} />
        <StatusCell $width={125} $grow={1}>
          <svg width="24" height="13" viewBox="0 0 24 13" shapeRendering="crispEdges" aria-hidden="true">
            {[0, 1, 2, 3, 4, 5, 6, 7].map(i => (
              <React.Fragment key={i}>
                <rect x={i * 3} y="0" width="2" height={10 - i} fill="#5a7a0c" />
                <rect x={i * 3} y={11 - i} width="2" height={2 + i} fill="#a01010" />
              </React.Fragment>
            ))}
          </svg>
          498/14 kb
        </StatusCell>
        <svg width="12" height="20" viewBox="0 0 12 20" aria-hidden="true">
          <path d="M1 19L12 8M5 19l7-7M9 19l3-3" stroke="#808080" strokeWidth="2" />
          <path d="M0 18L12 6" stroke="#fff" />
        </svg>
      </StatusBar>

      <ImageTools />
    </Window>
  </>
);

export default App;
